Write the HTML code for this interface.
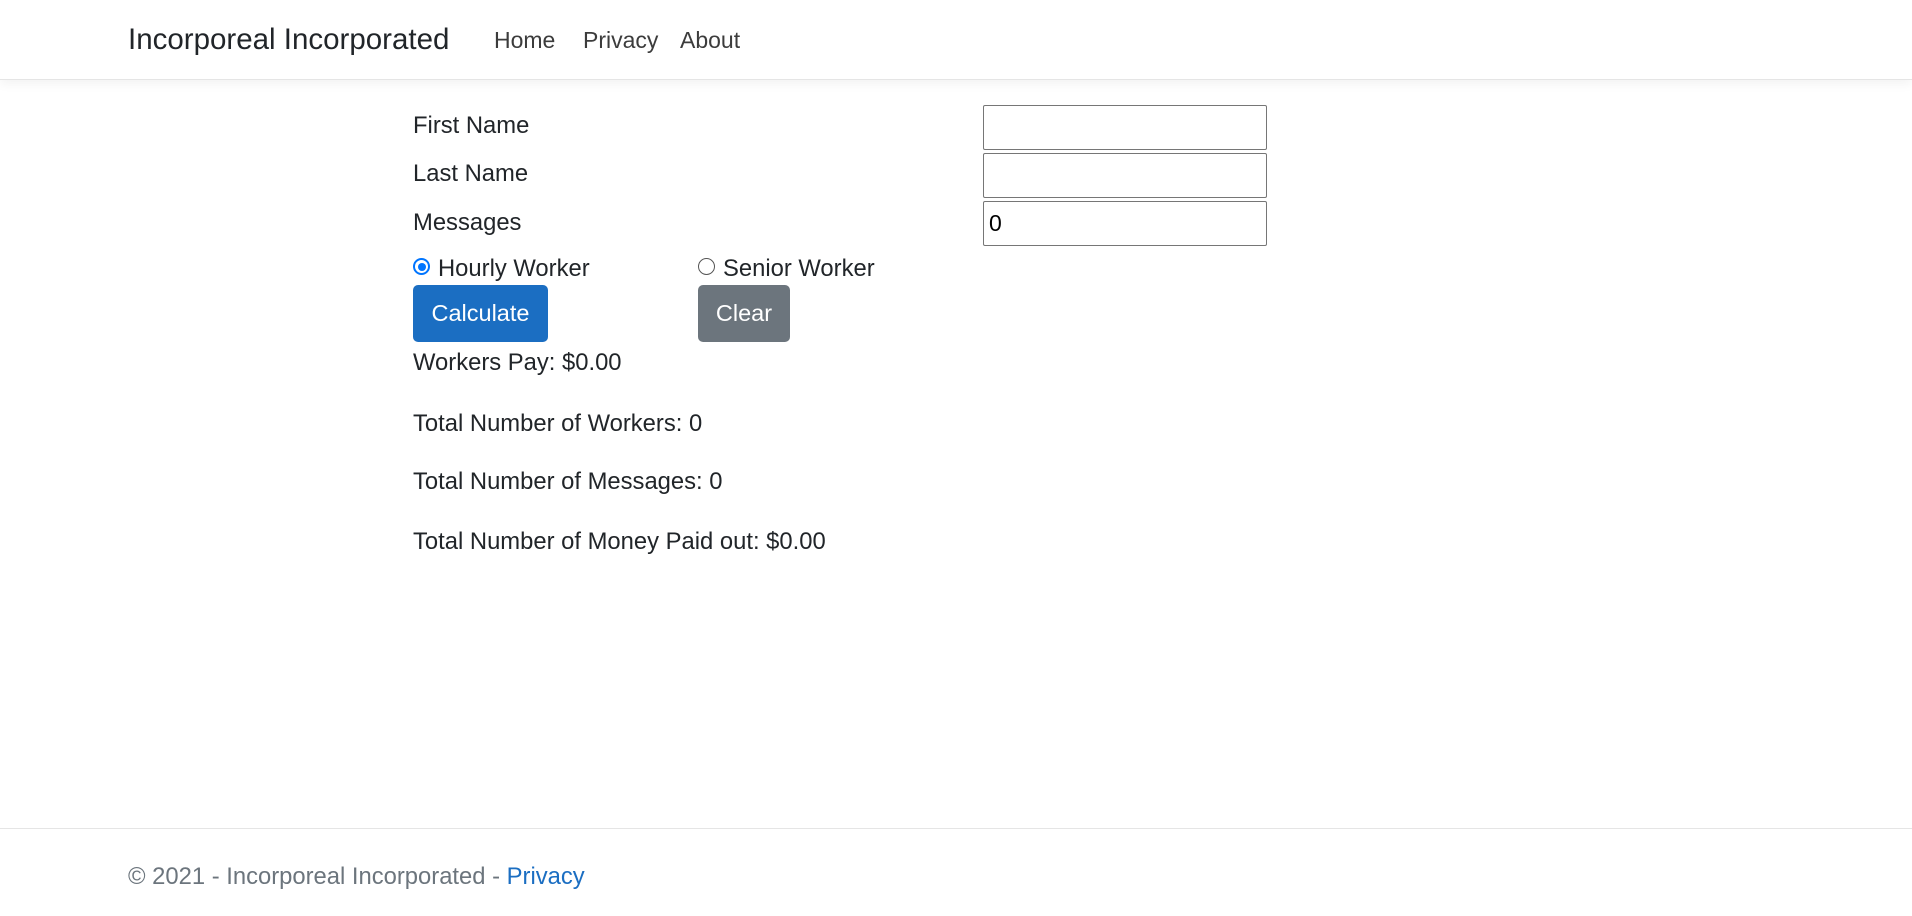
<!DOCTYPE html>
<html><head><meta charset="utf-8"><style>
*{box-sizing:border-box;margin:0;padding:0}
body{width:1912px;height:916px;position:relative;font-family:"Liberation Sans",sans-serif;color:#212529;background:#fff;overflow:hidden;font-size:23.8px}
.nav{position:absolute;left:0;top:0;width:1912px;height:80px;border-bottom:1px solid #e5e5e5;box-shadow:0 4px 10px rgba(0,0,0,.05)}
.abs{position:absolute;white-space:nowrap;line-height:1}
.brand{font-size:29.5px;color:#212529}
.nl{color:#3c3c3c;font-size:23px}
input.t{position:absolute;left:983px;width:284px;height:45px;border:1px solid #767676;border-radius:2px;font:23px "Liberation Sans",sans-serif;padding-left:5px}
.radio{position:absolute;width:17px;height:17px;border-radius:50%;border:1.5px solid #555;background:#fff}
.radio.on{border:2px solid #0075ff}
.radio.on:after{content:"";position:absolute;left:2.5px;top:2.5px;width:8px;height:8px;border-radius:50%;background:#0075ff}
.btn{position:absolute;color:#fff;border-radius:5px;font-size:23.5px;display:flex;align-items:center;justify-content:center}
.foot{position:absolute;left:0;top:828px;width:1912px;border-top:1px solid #e5e5e5}
</style></head><body>
<div class="nav"></div>
<div class="abs brand" style="left:128px;top:25px">Incorporeal Incorporated</div>
<div class="abs nl" style="left:494px;top:29px">Home</div>
<div class="abs nl" style="left:583px;top:29px">Privacy</div>
<div class="abs nl" style="left:680px;top:29px">About</div>

<div class="abs" style="left:413px;top:114px">First Name</div>
<div class="abs" style="left:413px;top:162px">Last Name</div>
<div class="abs" style="left:413px;top:211px">Messages</div>
<input class="t" style="top:105px" value="">
<input class="t" style="top:153px" value="">
<input class="t" style="top:201px" value="0">

<div class="radio on" style="left:413px;top:258px"></div>
<div class="abs" style="left:438px;top:257px">Hourly Worker</div>
<div class="radio" style="left:698px;top:258px"></div>
<div class="abs" style="left:723px;top:257px">Senior Worker</div>

<div class="btn" style="left:413px;top:285px;width:135px;height:57px;background:#1b6ec2">Calculate</div>
<div class="btn" style="left:698px;top:285px;width:92px;height:57px;background:#6c757d">Clear</div>

<div class="abs" style="left:413px;top:351px">Workers Pay: $0.00</div>
<div class="abs" style="left:413px;top:412px">Total Number of Workers: 0</div>
<div class="abs" style="left:413px;top:470px">Total Number of Messages: 0</div>
<div class="abs" style="left:413px;top:530px">Total Number of Money Paid out: $0.00</div>

<div class="foot"></div>
<div class="abs" style="left:128px;top:865px;color:#6c757d">© 2021 - Incorporeal Incorporated - <span style="color:#1b6ec2">Privacy</span></div>
</body></html>
